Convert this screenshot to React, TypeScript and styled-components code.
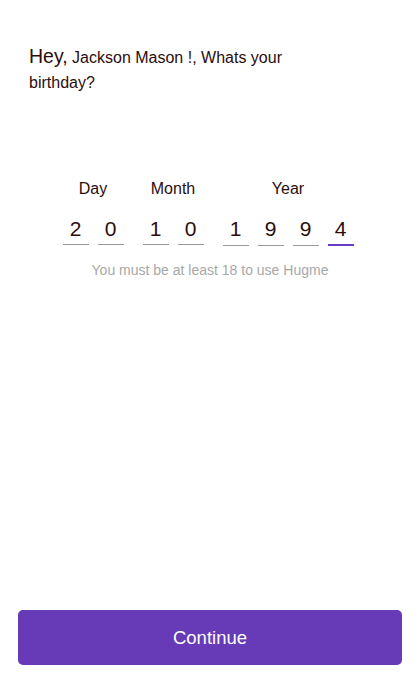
import React from "react";
import styled, { createGlobalStyle } from "styled-components";

const GlobalStyle = createGlobalStyle`
  html, body {
    margin: 0;
    padding: 0;
    background: #ffffff;
  }
  body {
    font-family: "Liberation Sans", Arial, sans-serif;
  }
`;

const Page = styled.div`
  width: 420px;
  height: 700px;
  display: flex;
  flex-direction: column;
  box-sizing: border-box;
  padding: 0 18px 35px;
`;

const Greeting = styled.h1`
  margin: 45px 0 0;
  padding: 0 11px;
  max-width: 290px;
  font-size: 16px;
  line-height: 25px;
  font-weight: 400;
  color: #2b0d0d;
  span {
    font-size: 19.5px;
    line-height: 1;
  }
`;

const Picker = styled.div`
  margin-top: 84px;
  display: flex;
  justify-content: center;
  gap: 19px;
  padding-right: 4px;
`;

const Group = styled.div`
  display: flex;
  flex-direction: column;
  align-items: center;
`;

const Label = styled.div`
  font-size: 16px;
  line-height: 19px;
  color: #2b0d0d;
`;

const Cells = styled.div`
  display: flex;
  gap: 9px;
  margin-top: 19px;
`;

const Cell = styled.div<{ $active?: boolean }>`
  width: 26px;
  font-size: 21px;
  line-height: 24px;
  text-align: center;
  color: #2b0d0d;
  padding-bottom: 3px;
  border-bottom: ${({ $active }) => ($active ? "2px solid #6a3cc6" : "1.5px solid #9a9a9a")};
`;

const Hint = styled.p`
  margin: 16px 0 0;
  text-align: center;
  font-size: 14px;
  line-height: 16px;
  color: #a8a8a8;
`;

const Spacer = styled.div`
  flex: 1;
`;

const ContinueButton = styled.button`
  height: 55px;
  width: 100%;
  border: none;
  border-radius: 5px;
  background: #673ab7;
  color: #ffffff;
  font-family: "Liberation Sans", Arial, sans-serif;
  font-size: 18.5px;
  cursor: pointer;
`;

const groups = [
  { label: "Day", digits: ["2", "0"] },
  { label: "Month", digits: ["1", "0"] },
  { label: "Year", digits: ["1", "9", "9", "4"] },
];

const App = () => {
  return (
    <>
      <GlobalStyle />
      <Page>
        <Greeting>
          <span>Hey,</span> Jackson Mason !, Whats your birthday?
        </Greeting>
        <Picker>
          {groups.map((g, gi) => (
            <Group key={g.label}>
              <Label>{g.label}</Label>
              <Cells>
                {g.digits.map((d, i) => (
                  <Cell key={i} $active={gi === 2 && i === 3}>
                    {d}
                  </Cell>
                ))}
              </Cells>
            </Group>
          ))}
        </Picker>
        <Hint>You must be at least 18 to use Hugme</Hint>
        <Spacer />
        <ContinueButton>Continue</ContinueButton>
      </Page>
    </>
  );
};

export default App;
